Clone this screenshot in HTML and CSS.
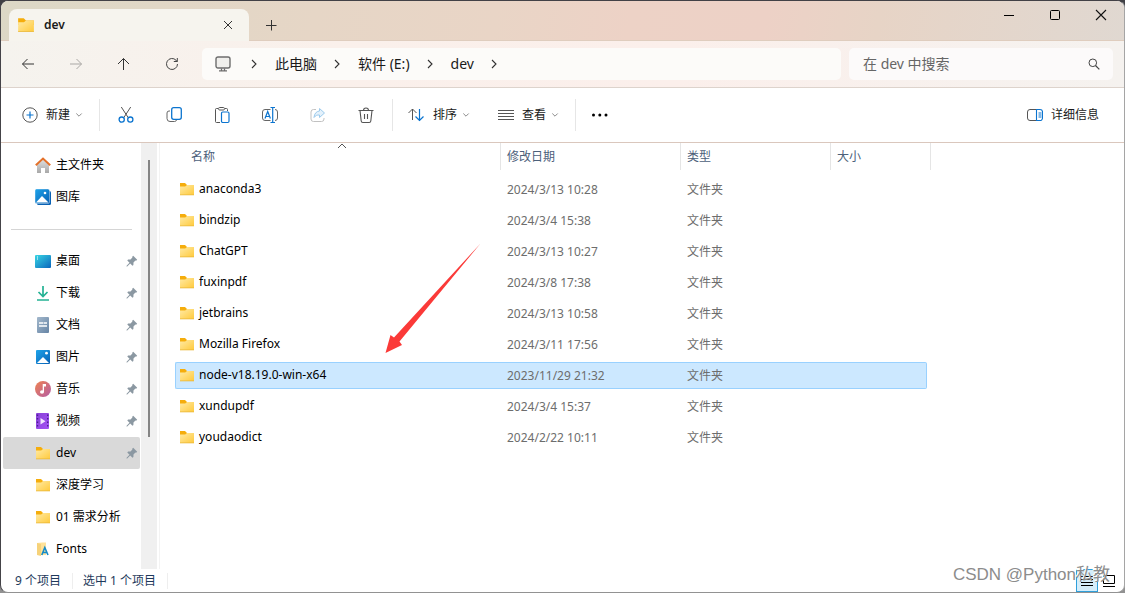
FILE: index.html
```html
<!DOCTYPE html>
<html lang="zh-CN">
<head>
<meta charset="utf-8">
<title>dev</title>
<link rel="stylesheet" href="styles.css">
</head>
<body>
<svg class="defs" aria-hidden="true">
  <defs>
    <linearGradient id="g-folder" x1="0" y1="0" x2="1" y2="1"><stop offset="0" stop-color="#ffeaa5"/><stop offset="1" stop-color="#ffca3c"/></linearGradient>
    <linearGradient id="g-blue" x1="0" y1="0" x2="1" y2="1"><stop offset="0" stop-color="#1fa4ea"/><stop offset="1" stop-color="#0860b4"/></linearGradient>
    <linearGradient id="g-desk" x1="0" y1="0" x2="1" y2="1"><stop offset="0" stop-color="#38d6e4"/><stop offset="1" stop-color="#0b66bd"/></linearGradient>
    <linearGradient id="g-house" x1="0" y1="0" x2="0" y2="1"><stop offset="0" stop-color="#e2e2e2"/><stop offset="1" stop-color="#a8a8a8"/></linearGradient>
    <linearGradient id="g-doc" x1="0" y1="0" x2="1" y2="1"><stop offset="0" stop-color="#a3b8cc"/><stop offset="1" stop-color="#6684a5"/></linearGradient>
    <linearGradient id="g-music" x1="0" y1="0" x2="1" y2="1"><stop offset="0" stop-color="#ef8350"/><stop offset="1" stop-color="#b45ca5"/></linearGradient>
    <linearGradient id="g-video" x1="0" y1="0" x2="1" y2="1"><stop offset="0" stop-color="#8740d6"/><stop offset="1" stop-color="#a552f5"/></linearGradient>
    <symbol id="folder" viewBox="0 0 16 14"><path d="M1 1h5l2 2h7v4H1z" fill="#f5ad0c"/><path d="M1 4.500h5.200L8 3h7v10H1z" fill="url(#g-folder)"/><path d="M1 12.500h14v.8H1z" fill="#e9b73b"/></symbol>
    <symbol id="pin" viewBox="0 0 12 12"><path d="M7.200.8 11.200 4.800 10.100 5.800 9.400 5.600 7.500 7.500 7.400 9.900 6.500 10.700 4.200 8.500 1.200 11.400.5 11.500.6 10.800 3.500 7.800 1.300 5.500 2.100 4.600 4.500 4.500 6.400 2.600 6.200 1.800z" fill="#8b98a2"/></symbol>
    <symbol id="chev-r" viewBox="0 0 8 10"><path d="M2 1l4 4-4 4" fill="none" stroke="#333" stroke-width="1.1"/></symbol>
    <symbol id="chev-d" viewBox="0 0 8 6"><path d="M1.300 1.500 4 4.200l2.700-2.700" fill="none" stroke="#8c8c8c"/></symbol>
  </defs>
</svg>
<div class="window">
  <header class="titlebar">
    <div class="tab">
      <svg class="tab-icon" aria-hidden="true"><use href="#folder"/></svg>
      <span class="tab-title">dev</span>
      <button class="tab-close" aria-label="关闭标签页"><svg width="10" height="10" viewBox="0 0 10 10"><path d="M1 1l8 8M9 1 1 9" stroke="#333"/></svg></button>
    </div>
    <button class="tab-new" aria-label="新标签页"><svg width="12" height="12" viewBox="0 0 12 12"><path d="M6.500 1v10.500M1 6.500h10.500" stroke="#333"/></svg></button>
    <div class="caption">
      <button aria-label="最小化"><svg width="12" height="12" viewBox="0 0 12 12"><path d="M1 6.500h10" stroke="#000"/></svg></button>
      <button aria-label="最大化"><svg width="12" height="12" viewBox="0 0 12 12"><rect x="1.500" y="1.500" width="9" height="9" rx="1" fill="none" stroke="#000"/></svg></button>
      <button aria-label="关闭"><svg width="12" height="12" viewBox="0 0 12 12"><path d="M1 1l10 10M11 1 1 11" stroke="#111" stroke-width="1.1"/></svg></button>
    </div>
  </header>

  <div class="navbar">
    <div class="nav-buttons">
      <button aria-label="后退"><svg width="14" height="14" viewBox="0 0 14 14"><path d="M13 7H1.500M6.500 2l-5 5 5 5" fill="none" stroke="#333"/></svg></button>
      <button aria-label="前进" disabled><svg width="14" height="14" viewBox="0 0 14 14"><path d="M1 7h11.500M7.500 2l5 5-5 5" fill="none" stroke="#aaa8a5"/></svg></button>
      <button aria-label="向上"><svg width="14" height="14" viewBox="0 0 14 14"><path d="M6.500 13V1.500M1 7 6.500 1.500 12 7" fill="none" stroke="#333"/></svg></button>
      <button aria-label="刷新"><svg width="14" height="14" viewBox="0 0 14 14"><path d="M12.500 7A5.500 5.500 0 1 1 11 3.200L12.300 4.500M12.300 1v3.500H8.800" fill="none" stroke="#444"/></svg></button>
    </div>
    <nav class="address" aria-label="地址栏">
      <svg class="pc" viewBox="0 0 16 16" aria-hidden="true"><rect x="1" y="1" width="14" height="11" rx="2" fill="#f0efec" stroke="#6d6d6d" stroke-width="1.400"/><path d="M6.500 12.500v2M9.500 12.500v2M4 14.800h8" stroke="#6d6d6d" stroke-width="1.300"/></svg>
      <svg class="sep" aria-hidden="true"><use href="#chev-r"/></svg>
      <a href="#">此电脑</a>
      <svg class="sep" aria-hidden="true"><use href="#chev-r"/></svg>
      <a href="#">软件 (E:)</a>
      <svg class="sep" aria-hidden="true"><use href="#chev-r"/></svg>
      <a href="#">dev</a>
      <svg class="sep" aria-hidden="true"><use href="#chev-r"/></svg>
    </nav>
    <label class="search">
      <input type="text" placeholder="在 dev 中搜索" aria-label="在 dev 中搜索">
      <svg width="12" height="12" viewBox="0 0 12 12" aria-hidden="true"><circle cx="4.800" cy="4.800" r="3.800" fill="none" stroke="#444"/><path d="M7.500 7.500 11.300 11.300" stroke="#444" stroke-width="1.200"/></svg>
    </label>
  </div>

  <div class="toolbar">
    <button class="tool new"><svg width="16" height="16" viewBox="0 0 16 16"><circle cx="8" cy="8" r="7.200" fill="none" stroke="#555"/><path d="M8 4.500v7M4.500 8h7" stroke="#0b74cf" stroke-width="1.200"/></svg>新建<svg class="down"><use href="#chev-d"/></svg></button>
    <span class="rule"></span>
    <div class="icon-tools">
      <button aria-label="剪切"><svg width="18" height="18" viewBox="0 0 18 18" fill="none"><path d="M4.300 1 11.300 11.800M13.700 1 6.700 11.800" stroke="#555"/><circle cx="4.700" cy="13.600" r="2.600" stroke="#0b74cf" stroke-width="1.300"/><circle cx="13.300" cy="13.600" r="2.600" stroke="#0b74cf" stroke-width="1.300"/></svg></button>
      <button aria-label="复制"><svg width="18" height="18" viewBox="0 0 18 18" fill="none"><path d="M5 5H4a2 2 0 0 0-2 2v5.500a3 3 0 0 0 3 3h4.500a2 2 0 0 0 2-1.500" stroke="#666"/><rect x="6.700" y="1.700" width="9.600" height="11.600" rx="2" stroke="#0b74cf" stroke-width="1.300"/></svg></button>
      <button aria-label="粘贴"><svg width="18" height="18" viewBox="0 0 18 18" fill="none" stroke="#555"><path d="M5 2.500H3.500a1 1 0 0 0-1 1v12a1 1 0 0 0 1 1H7M12 2.500h1.500a1 1 0 0 1 1 1V5"/><rect x="5.500" y="1.500" width="6" height="2.500" rx="1.200"/><rect x="8.500" y="6" width="7.500" height="10.500" rx="1.200" stroke="#0b74cf" stroke-width="1.200"/></svg></button>
      <button aria-label="重命名"><svg width="18" height="18" viewBox="0 0 18 18" fill="none"><path d="M9.500 3.500H4a2.500 2.500 0 0 0-2.500 2.500v6A2.500 2.500 0 0 0 4 14.500h5.500M14 3.500a2.500 2.500 0 0 1 2.500 2.500v6a2.500 2.500 0 0 1-2.500 2.500" stroke="#666"/><path d="M4 12.500 6.700 5.500l2.700 7M5 10.500h3.600M11.700 1.500v15M9.500 1.500h4.500M9.500 16.500h4.500" stroke="#0b74cf" stroke-width="1.200"/></svg></button>
      <button aria-label="共享" disabled><svg width="18" height="18" viewBox="0 0 18 18" fill="none"><path d="M7 3.500H4.500A2.500 2.500 0 0 0 2 6v7a2.500 2.500 0 0 0 2.500 2.500h8A2.500 2.500 0 0 0 15 13v-1" stroke="#c1c1c1"/><path d="M10.500 2.500 15.500 7l-5 4.500V9C8 8.800 6.500 9.600 5 11.500 5.300 7.500 7.500 5.300 10.500 5z" fill="#e4f1fb" stroke="#9ccbed"/></svg></button>
      <button aria-label="删除"><svg width="18" height="18" viewBox="0 0 18 18" fill="none" stroke="#555"><path d="M1.500 4.500h15M6.500 4.500a2.500 2.500 0 0 1 5 0M3 4.500l1.200 10.500a1.700 1.700 0 0 0 1.600 1.500h6.400a1.700 1.700 0 0 0 1.600-1.500L15 4.500M7.500 8v5M10.500 8v5" stroke-width="1.100"/></svg></button>
    </div>
    <span class="rule"></span>
    <button class="tool sort"><svg width="18" height="16" viewBox="0 0 18 16" fill="none"><path d="M5.500 13V2M1.500 6l4-4 4 4" stroke="#555"/><path d="M12.500 2v12M8.500 9.500l4 4 4-4" stroke="#0b74cf" stroke-width="1.200"/></svg>排序<svg class="down"><use href="#chev-d"/></svg></button>
    <button class="tool view"><svg width="16" height="16" viewBox="0 0 16 16"><path d="M0 3.500h16M0 6.500h16M0 9.500h16M0 12.500h16" stroke="#555"/></svg>查看<svg class="down"><use href="#chev-d"/></svg></button>
    <span class="rule"></span>
    <button class="tool more" aria-label="更多"><svg width="18" height="4" viewBox="0 0 18 4"><circle cx="2.500" cy="2" r="1.500"/><circle cx="8.800" cy="2" r="1.500"/><circle cx="15" cy="2" r="1.500"/></svg></button>
    <button class="tool details"><svg width="16" height="16" viewBox="0 0 16 16" fill="none"><path d="M9.500 2.500H3A2.500 2.500 0 0 0 .5 5v6A2.500 2.500 0 0 0 3 13.500h6.500" stroke="#555"/><path d="M9.500 2.500H13A2.500 2.500 0 0 1 15.500 5v6a2.500 2.500 0 0 1-2.500 2.500H9.500zM11.500 6h3M11.500 8h3M11.500 10h3" stroke="#0b74cf" stroke-width="1.100"/></svg>详细信息</button>
  </div>

  <div class="content">
    <nav class="sidebar" aria-label="导航窗格">
      <div class="links">
        <a href="#"><svg class="ico" viewBox="0 0 16 16"><path d="M2 7.500 8 2l6 5.500V16H10v-5H6v5H2z" fill="url(#g-house)"/><path d="M.8 8.200 8 1.500l7.200 6.700" fill="none" stroke="#e4712a" stroke-width="2"/></svg>主文件夹</a>
        <a href="#"><svg class="ico" viewBox="0 0 16 16"><rect x="2" y="2" width="14" height="14" rx="1.500" fill="#0a62b4"/><rect x="0" y="0" width="14.500" height="14.500" rx="1.500" fill="url(#g-blue)" stroke="#fff" stroke-width=".4"/><circle cx="10" cy="4" r="1.300" fill="#fff"/><path d="M1 13.500 7 7l6.500 6.500z" fill="#fff"/></svg>图库</a>
        <hr>
        <a href="#"><svg class="ico" viewBox="0 0 16 16"><rect y="2" width="16" height="13" rx="1" fill="url(#g-desk)"/><path d="M2 4h1M2 6h1" stroke="#fff"/></svg>桌面<svg class="pin"><use href="#pin"/></svg></a>
        <a href="#"><svg class="ico" viewBox="0 0 16 16" fill="none" stroke="#24b294" stroke-width="1.700"><path d="M8 1v10.500M3.500 7 8 11.500 12.500 7M2 15h12"/></svg>下载<svg class="pin"><use href="#pin"/></svg></a>
        <a href="#"><svg class="ico" viewBox="0 0 16 16"><rect x="2" width="12" height="16" rx="1" fill="url(#g-doc)"/><path d="M4 6h4M4 9h8M8.500 6H12" stroke="#fff" stroke-width="1.500"/></svg>文档<svg class="pin"><use href="#pin"/></svg></a>
        <a href="#"><svg class="ico" viewBox="0 0 16 16"><rect x="1" y="1" width="14" height="14" rx="1" fill="url(#g-blue)"/><circle cx="11.500" cy="4.200" r="1.400" fill="#fff"/><path d="M2 14 8 8l6 6z" fill="#fff"/></svg>图片<svg class="pin"><use href="#pin"/></svg></a>
        <a href="#"><svg class="ico" viewBox="0 0 16 16"><circle cx="8" cy="8" r="8" fill="url(#g-music)"/><ellipse cx="7" cy="11" rx="2" ry="1.800" fill="#fff"/><path d="M7.700 3h3.300v2.500H9V11H7.700z" fill="#fff"/></svg>音乐<svg class="pin"><use href="#pin"/></svg></a>
        <a href="#"><svg class="ico" viewBox="0 0 16 16"><rect x="1" width="13" height="16" rx="1" fill="url(#g-video)"/><path d="M2.500 1.500v14M12.700 1.500v14" stroke="#4c1e91" stroke-width="1.400" stroke-dasharray="1.500 2"/><path d="M5.500 5v6.500l5-3.200z" fill="#f3e5ff"/></svg>视频<svg class="pin"><use href="#pin"/></svg></a>
        <a href="#" class="active" aria-current="page"><svg class="ico"><use href="#folder"/></svg>dev<svg class="pin"><use href="#pin"/></svg></a>
        <a href="#"><svg class="ico"><use href="#folder"/></svg>深度学习</a>
        <a href="#"><svg class="ico"><use href="#folder"/></svg>01 需求分析</a>
        <a href="#"><svg class="ico" viewBox="0 0 16 16"><path d="M2 2 7 1.500h4V14H2z" fill="#ffe29a"/><path d="M2 2l4 1v12l-4-1z" fill="#f6d27a"/><path d="M6.800 14 9.800 6.500 13 14M8 11.500h4" fill="none" stroke="#168bc9" stroke-width="1.600"/></svg>Fonts</a>
      </div>
      <div class="scroll"><span class="thumb"></span></div>
    </nav>
    <main class="files">
      <svg class="sort-mark" viewBox="0 0 10 6" aria-hidden="true"><path d="M1 5l4-4 4 4" fill="none" stroke="#555"/></svg>
      <table>
        <colgroup><col class="c-name"><col class="c-date"><col class="c-type"><col class="c-size"><col class="c-end"></colgroup>
        <thead><tr><th>名称</th><th>修改日期</th><th>类型</th><th>大小</th><th></th></tr></thead>
        <tbody>
          <tr><td><svg><use href="#folder"/></svg>anaconda3</td><td>2024/3/13 10:28</td><td>文件夹</td><td></td></tr>
          <tr><td><svg><use href="#folder"/></svg>bindzip</td><td>2024/3/4 15:38</td><td>文件夹</td><td></td></tr>
          <tr><td><svg><use href="#folder"/></svg>ChatGPT</td><td>2024/3/13 10:27</td><td>文件夹</td><td></td></tr>
          <tr><td><svg><use href="#folder"/></svg>fuxinpdf</td><td>2024/3/8 17:38</td><td>文件夹</td><td></td></tr>
          <tr><td><svg><use href="#folder"/></svg>jetbrains</td><td>2024/3/13 10:58</td><td>文件夹</td><td></td></tr>
          <tr><td><svg><use href="#folder"/></svg>Mozilla Firefox</td><td>2024/3/11 17:56</td><td>文件夹</td><td></td></tr>
          <tr class="selected"><td><svg><use href="#folder"/></svg>node-v18.19.0-win-x64</td><td>2023/11/29 21:32</td><td>文件夹</td><td></td></tr>
          <tr><td><svg><use href="#folder"/></svg>xundupdf</td><td>2024/3/4 15:37</td><td>文件夹</td><td></td></tr>
          <tr><td><svg><use href="#folder"/></svg>youdaodict</td><td>2024/2/22 10:11</td><td>文件夹</td><td></td></tr>
        </tbody>
      </table>
      <svg class="arrow" viewBox="0 0 96 110" aria-hidden="true"><path d="M95.500.5 14.500 98.500 17 102 .5 110 5.500 92l3.500 2.500z" fill="#fb3a38"/></svg>
    </main>
  </div>

  <footer class="status">
    <span>9 个项目</span><span>选中 1 个项目</span>
    <div class="views">
      <button class="on" aria-label="详细信息视图"><svg width="14" height="14" viewBox="0 0 14 14"><path d="M1 2.500h12M1 5.500h12M1 8.500h12M1 11.500h12" stroke="#000"/></svg></button>
      <button aria-label="大图标视图"><svg width="14" height="14" viewBox="0 0 14 14"><path d="M1.500 1.500h11v8h-11zM1 12.500h12" fill="none" stroke="#000"/></svg></button>
    </div>
    <span class="watermark">CSDN @Python私教</span>
  </footer>
</div>
</body>
</html>
```

FILE: styles.css
```css
* { box-sizing: border-box; }
body {
  margin: 0;
  height: 100vh;
  background: linear-gradient(#404045, #404045 60%, #929292);
  font: 12px/16px "Noto Sans", "Noto Sans CJK SC", sans-serif;
  color: #1a1a1a;
  overflow: hidden;
}
button { font: inherit; color: inherit; border: 0; padding: 0; background: none; display: flex; align-items: center; justify-content: center; }
a { color: inherit; text-decoration: none; }
svg { flex: none; display: block; }
.defs { position: absolute; width: 0; height: 0; }
.window {
  position: relative;
  display: flex;
  flex-direction: column;
  height: 100%;
  border: 1px solid;
  border-color: #424146 #a5a5a5 #929292 #444348;
  border-radius: 8px;
  background: #fff;
  overflow: hidden;
}

.titlebar {
  display: flex;
  height: 40px;
  padding-left: 8px;
  background: linear-gradient(100deg, #dcd8c6, #e6d6c6 28%, #e9d5c6 44%, #edd2c6 56%, #edd1c6 68%, #e7d4c6 78%, #e0d8d1);
  border-bottom: 1px solid #dfcdbe;
}
.tab {
  display: flex;
  align-items: center;
  width: 240px;
  height: 32px;
  margin-top: 8px;
  padding: 0 16px 0 8px;
  border-radius: 8px 8px 0 0;
  background: #f6f4ee;
}
.tab-icon { width: 18px; height: 16px; }
.tab-title { flex: 1; margin-left: 9px; font-weight: 600; }
.tab-new { width: 44px; margin-top: 8px; }
.caption { display: flex; margin-left: auto; height: 28px; }
.caption button { width: 46px; }

.navbar {
  display: flex;
  height: 47px;
  padding: 7px 11px 7px 3px;
  background: linear-gradient(90deg, #f5f3ee, #faf0eb 30%, #fbefeb 60%, #f5f2ef);
  border-bottom: 1px solid #ddd3cc;
}
.nav-buttons { display: flex; width: 198px; }
.nav-buttons button { width: 48px; }
.address {
  display: flex;
  flex: 1;
  align-items: center;
  padding-left: 13px;
  border-radius: 5px;
  background: #fcfbf9;
  font-size: 14px;
  line-height: 20px;
}
.pc { width: 16px; height: 16px; margin-right: 9px; }
.sep { width: 8px; height: 10px; margin: 0 8px; }
.address a { padding: 0 8px 0 9px; }
.sep:nth-of-type(2) { margin-left: 10px; }
.search {
  display: flex;
  align-items: center;
  width: 264px;
  margin-left: 8px;
  padding: 0 13px 0 14px;
  border-radius: 5px;
  background: #fcfafa;
}
.search input { flex: 1; min-width: 0; border: 0; padding: 0; outline: 0; background: none; font: 14px/20px "Noto Sans", "Noto Sans CJK SC", sans-serif; }
.search input::placeholder { color: #666; opacity: 1; }

.toolbar {
  display: flex;
  align-items: center;
  height: 55px;
  padding: 0 25px 0 21px;
  border-bottom: 1px solid #dac7bd;
}
.tool { gap: 8px; height: 32px; }
.down { width: 8px; height: 6px; margin-left: -3px; }
.rule { width: 1px; height: 32px; background: #e6e6e6; }
.new { margin-right: 16px; }
.icon-tools { display: flex; padding: 0 2px; }
.icon-tools button { width: 48px; height: 32px; }
.sort { margin: 0 28px 0 14px; }
.view { margin-right: 16px; }
.more { margin-left: 15px; }
.details { margin-left: auto; }

.content { display: flex; flex: 1; min-height: 0; }
.sidebar { display: flex; width: 159px; border-right: 1px solid #f3f3f3; color: #000; }
.links { flex: 1; padding: 6px 1px 0 2px; overflow: hidden; }
.links a { display: flex; align-items: center; height: 32px; padding: 0 2px 0 32px; border-radius: 2px; white-space: nowrap; }
.links .active { background: #d9d9d9; }
.links hr { height: 1px; margin: 16px 8px 15px; border: 0; background: #d5d5d5; }
.ico { width: 16px; height: 16px; margin-right: 5px; }
.pin { width: 12px; height: 12px; margin-left: auto; }
.scroll { width: 16px; margin-right: 2px; padding-top: 17px; background: #f0f0f0; }
.thumb { display: block; width: 2px; height: 277px; margin-left: 7px; background: #858585; }

.files { position: relative; flex: 1; padding-left: 15px; overflow: hidden; }
.sort-mark { position: absolute; left: 177px; top: 0; width: 10px; height: 6px; }
table { table-layout: fixed; width: 756px; margin-top: -4px; border-spacing: 0 4px; }
.c-name { width: 326px; }
.c-date { width: 180px; }
.c-type { width: 150px; }
.c-size { width: 96px; }
.c-end { width: 4px; }
th { height: 29px; padding: 0 6px 2px; text-align: left; font-weight: 400; color: #4c607a; background: linear-gradient(#e5e5e5, #e5e5e5) right top / 1px 27px no-repeat; }
th:first-child { padding-left: 16px; }
th:nth-child(4) { background: none; }
th:last-child { padding: 0; }
td { height: 27px; padding: 0 6px; border: 1px solid transparent; border-width: 1px 0; color: #6d6d6d; }
td:first-child { padding-left: 3px; color: #000; border-left-width: 1px; border-radius: 2px 0 0 2px; }
td:nth-child(4) { border-right-width: 1px; border-radius: 0 2px 2px 0; }
td svg { display: inline-block; width: 16px; height: 16px; padding-bottom: 2px; margin-right: 4px; vertical-align: middle; }
.selected td { background: #cce8ff; border-color: #99d1ff; }
.arrow { position: absolute; left: 225px; top: 100px; width: 96px; height: 110px; }

.status { position: relative; display: flex; align-items: center; height: 23px; padding-left: 14px; color: #1e395b; }
.status > span:not(.watermark) { margin-right: 10px; padding-right: 11px; border-right: 1px solid #eee; }
.views { display: flex; margin-left: auto; padding-right: 4px; }
.views button { width: 22px; height: 23px; }
.views .on { background: #d5edfa; border: 1px solid #2f9fda; }
.watermark { position: absolute; right: 14px; bottom: 5px; font: 17px/24px "Liberation Sans", "Noto Sans CJK SC", sans-serif; color: #8c8c8c; text-shadow: -1px -1px 0 #fff; white-space: nowrap; }
```
